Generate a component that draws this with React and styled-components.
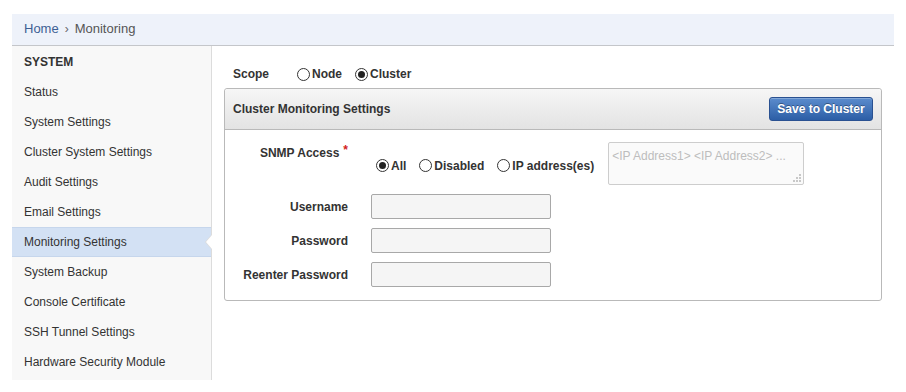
import React from "react";
import styled, { createGlobalStyle } from "styled-components";

const Global = createGlobalStyle`
  html, body { margin: 0; padding: 0; background: #fff; }
  body { font-family: "Liberation Sans", Arial, sans-serif; font-size: 12px; color: #333; }
  * { box-sizing: border-box; }
`;

const Page = styled.div`
  padding: 14px 12px 0 12px;
  width: 906px;
`;

const Breadcrumb = styled.div`
  height: 32px;
  background: #eef2fa;
  border-bottom: 1px solid #c4c6ca;
  display: flex;
  align-items: center;
  padding-left: 12px;
  font-size: 13px;
  padding-bottom: 2px;
`;

const Crumb = styled.span`
  color: ${(p) => (p.$link ? "#3d5f94" : "#555")};
`;

const Sep = styled.span`
  color: #666;
  margin: 0 6px;
  font-size: 12px;
`;

const Body = styled.div`
  display: flex;
  align-items: flex-start;
`;

const Sidebar = styled.nav`
  width: 200px;
  flex: none;
  background: #f8f8f8;
  border-right: 1px solid #dcdcdc;
  padding-bottom: 3px;
`;

const SideHeading = styled.div`
  height: 31px;
  display: flex;
  align-items: center;
  padding-left: 12px;
  padding-top: 1px;
  font-weight: bold;
  color: #333;
`;

const SideItem = styled.div`
  position: relative;
  height: 30px;
  display: flex;
  align-items: center;
  padding-left: 12px;
  color: #333;
  background: ${(p) => (p.$active ? "#d3e1f4" : "transparent")};
  border-top: 1px solid ${(p) => (p.$active ? "#c6d6ec" : "transparent")};
  border-bottom: 1px solid ${(p) => (p.$active ? "#c6d6ec" : "transparent")};
  ${(p) =>
    p.$active &&
    `
    &::before {
      content: "";
      position: absolute;
      right: -1px;
      top: 6px;
      border-style: solid;
      border-width: 8px 7px 8px 0;
      border-color: transparent #dcdcdc transparent transparent;
    }
    &::after {
      content: "";
      position: absolute;
      right: -1px;
      top: 7px;
      border-style: solid;
      border-width: 7px 6px 7px 0;
      border-color: transparent #fff transparent transparent;
    }
  `}
`;

const Main = styled.main`
  flex: 1;
  padding: 18px 12px 0 12px;
`;

const ScopeRow = styled.div`
  display: flex;
  align-items: center;
  height: 20px;
  padding-left: 9px;
  margin-bottom: 4px;
`;

const ScopeLabel = styled.span`
  font-weight: bold;
  width: 64px;
`;

const RadioGroup = styled.div`
  display: flex;
  align-items: center;
  gap: ${(p) => p.$gap || 13}px;
  margin-top: ${(p) => p.$mt || 0}px;
`;

const RadioLabel = styled.label`
  display: inline-flex;
  align-items: center;
  gap: 2px;
  font-weight: bold;
  color: #333;
  cursor: pointer;
`;

const RadioInput = styled.input.attrs({ type: "radio" })`
  appearance: none;
  margin: 0;
  width: 13px;
  height: 13px;
  border: 1px solid #333;
  border-radius: 50%;
  background: #fff;
  display: inline-grid;
  place-content: center;
  &:checked::before {
    content: "";
    width: 7px;
    height: 7px;
    border-radius: 50%;
    background: #222;
  }
`;

const Panel = styled.section`
  border: 1px solid #b9b9b9;
  border-radius: 3px;
  width: 658px;
  background: #fff;
`;

const PanelHeader = styled.header`
  height: 41px;
  background: linear-gradient(#f6f6f6, #e3e3e3);
  border-bottom: 1px solid #b9b9b9;
  display: flex;
  align-items: center;
  justify-content: space-between;
  padding: 0 8px 0 8px;
  border-radius: 3px 3px 0 0;
`;

const PanelTitle = styled.h2`
  margin: 0;
  font-size: 12px;
  font-weight: bold;
  color: #333;
`;

const PrimaryButton = styled.button`
  width: 104px;
  height: 24px;
  margin-top: -1px;
  font-family: inherit;
  font-size: 12px;
  font-weight: bold;
  color: #fff;
  text-shadow: 0 -1px 0 rgba(0, 0, 0, 0.35);
  background: linear-gradient(#5b8ccd, #2c5ea6);
  border: 1px solid #2a5191;
  border-radius: 3px;
  box-shadow: inset 0 1px 0 rgba(255, 255, 255, 0.25);
  padding: 0;
  cursor: pointer;
`;

const PanelBody = styled.div`
  padding: 12px 0 13px 0;
  display: flex;
  flex-direction: column;
  gap: 9px;
`;

const FormRow = styled.div`
  display: flex;
  align-items: ${(p) => (p.$top ? "flex-start" : "center")};
`;

const FieldLabel = styled.label`
  width: 123px;
  flex: none;
  text-align: right;
  font-weight: bold;
  color: #333;
  padding-top: ${(p) => p.$pt || 0}px;
`;

const Required = styled.span`
  color: #d21c1c;
  margin-left: 4px;
  position: relative;
  top: -3px;
`;

const SnmpField = styled.div`
  display: flex;
  align-items: center;
  margin-left: 28px;
`;

const TextBox = styled.input`
  margin-left: 23px;
  width: 180px;
  height: 25px;
  border: 1px solid #a8a8a8;
  border-radius: 2px;
  background: #f5f5f5;
  font-family: inherit;
  font-size: 12px;
  padding: 0 4px;
`;

const AreaWrap = styled.div`
  position: relative;
  margin-left: 14px;
  width: 196px;
  height: 43px;
`;

const Area = styled.textarea`
  display: block;
  width: 100%;
  height: 100%;
  resize: none;
  border: 1px solid #cdcdcd;
  border-radius: 2px;
  background: #fafafa;
  font-family: inherit;
  font-size: 12px;
  padding: 6px 3px;
  color: #333;
  &::placeholder { color: #bdbdbd; }
`;

const Grip = styled.svg`
  position: absolute;
  right: 3px;
  bottom: 3px;
  pointer-events: none;
`;

const navItems = [
  "Status",
  "System Settings",
  "Cluster System Settings",
  "Audit Settings",
  "Email Settings",
  "Monitoring Settings",
  "System Backup",
  "Console Certificate",
  "SSH Tunnel Settings",
  "Hardware Security Module",
];

export default function App() {
  return (
    <Page>
      <Global />
      <Breadcrumb>
        <Crumb $link>Home</Crumb>
        <Sep>›</Sep>
        <Crumb>Monitoring</Crumb>
      </Breadcrumb>
      <Body>
        <Sidebar>
          <SideHeading>SYSTEM</SideHeading>
          {navItems.map((n) => (
            <SideItem key={n} $active={n === "Monitoring Settings"}>
              {n}
            </SideItem>
          ))}
        </Sidebar>
        <Main>
          <ScopeRow>
            <ScopeLabel>Scope</ScopeLabel>
            <RadioGroup $gap={13}>
              <RadioLabel>
                <RadioInput name="scope" />
                Node
              </RadioLabel>
              <RadioLabel>
                <RadioInput name="scope" defaultChecked />
                Cluster
              </RadioLabel>
            </RadioGroup>
          </ScopeRow>
          <Panel>
            <PanelHeader>
              <PanelTitle>Cluster Monitoring Settings</PanelTitle>
              <PrimaryButton>Save to Cluster</PrimaryButton>
            </PanelHeader>
            <PanelBody>
              <FormRow $top>
                <FieldLabel $pt={4}>
                  SNMP Access<Required>*</Required>
                </FieldLabel>
                <SnmpField>
                  <RadioGroup $gap={13} $mt={4}>
                    <RadioLabel>
                      <RadioInput name="snmp" defaultChecked />
                      All
                    </RadioLabel>
                    <RadioLabel>
                      <RadioInput name="snmp" />
                      Disabled
                    </RadioLabel>
                    <RadioLabel>
                      <RadioInput name="snmp" />
                      IP address(es)
                    </RadioLabel>
                  </RadioGroup>
                  <AreaWrap>
                    <Area placeholder="<IP Address1> <IP Address2> ..." />
                    <Grip width="8" height="8" viewBox="0 0 8 8">
                      <g fill="#c8c8c8">
                        <rect x="6" y="0" width="2" height="2" />
                        <rect x="3" y="3" width="2" height="2" />
                        <rect x="6" y="3" width="2" height="2" />
                        <rect x="0" y="6" width="2" height="2" />
                        <rect x="3" y="6" width="2" height="2" />
                        <rect x="6" y="6" width="2" height="2" />
                      </g>
                    </Grip>
                  </AreaWrap>
                </SnmpField>
              </FormRow>
              <FormRow>
                <FieldLabel>Username</FieldLabel>
                <TextBox type="text" />
              </FormRow>
              <FormRow>
                <FieldLabel>Password</FieldLabel>
                <TextBox type="password" />
              </FormRow>
              <FormRow>
                <FieldLabel>Reenter Password</FieldLabel>
                <TextBox type="password" />
              </FormRow>
            </PanelBody>
          </Panel>
        </Main>
      </Body>
    </Page>
  );
}
